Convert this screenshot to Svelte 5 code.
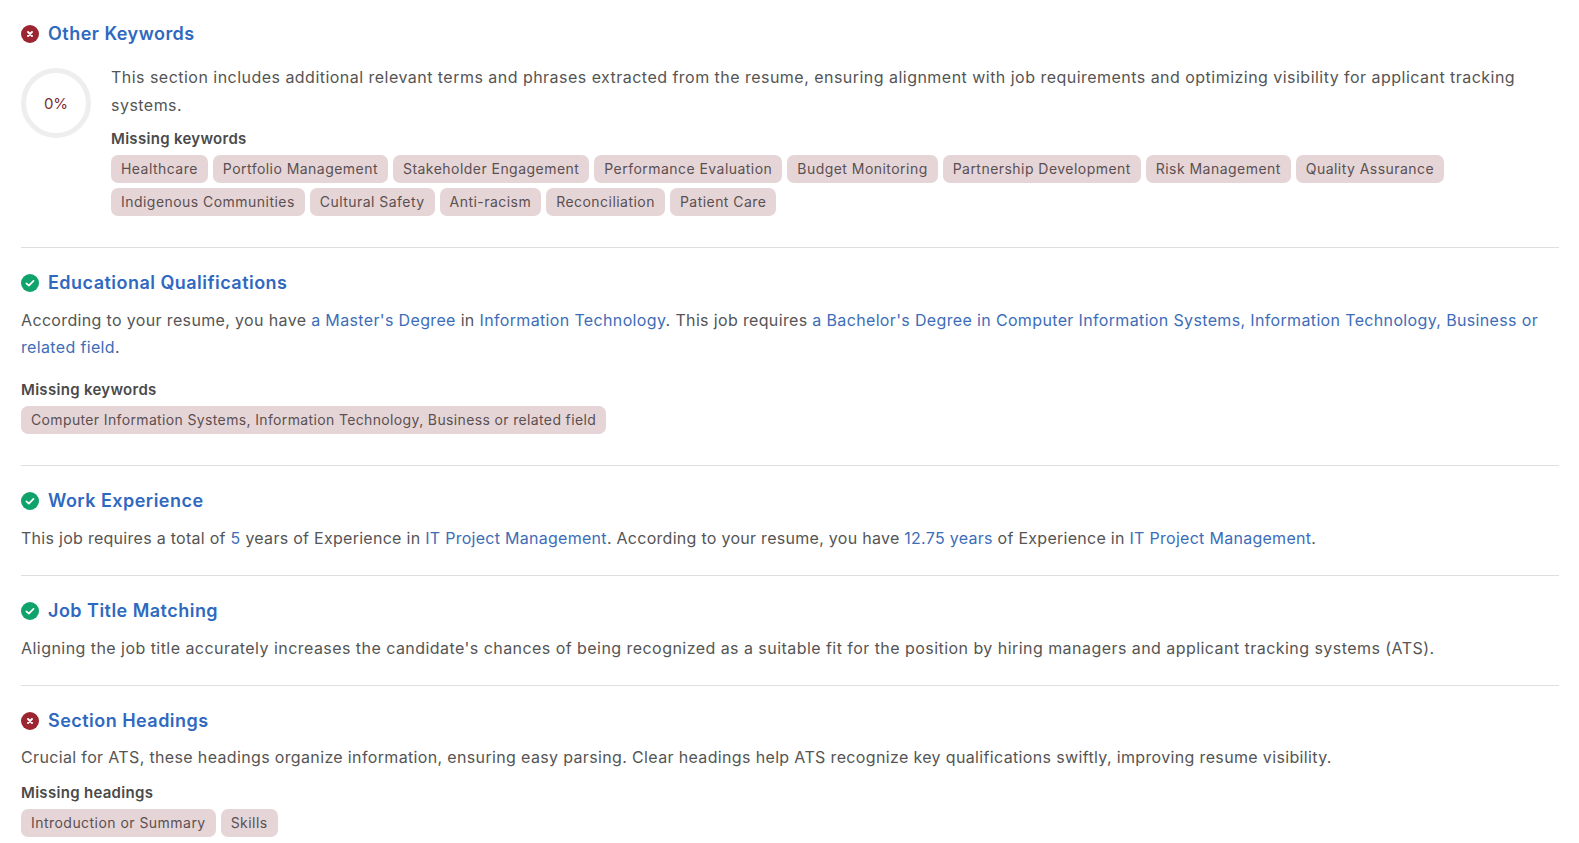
<script>
const first = ["Healthcare","Portfolio Management","Stakeholder Engagement","Performance Evaluation","Budget Monitoring","Partnership Development","Risk Management","Quality Assurance","Indigenous Communities","Cultural Safety","Anti-racism","Reconciliation","Patient Care"]
</script>

{#snippet status(ok)}
	<svg class="status" viewBox="0 0 18 18" width="18" height="18">
		<circle cx="9" cy="9" r="9" fill={ok ? "#0fa36b" : "#9b2530"} />
		{#if ok}
			<path d="M5.4 9.3l2.5 2.4 4.6-4.9" fill="none" stroke="#fff" stroke-width="1.7" stroke-linecap="round" stroke-linejoin="round" />
		{:else}
			<path d="M7 7l4 4M11 7l-4 4" fill="none" stroke="#fff" stroke-width="1.9" stroke-linecap="round" />
		{/if}
	</svg>
{/snippet}

<div class="page">
	<section class="first">
		<h2>{@render status(false)}Other Keywords</h2>
		<div class="score-row">
			<div class="ring">0%</div>
			<div class="score-body">
				<p class="intro">This section includes additional relevant terms and phrases extracted from the resume, ensuring alignment with job requirements and optimizing visibility for applicant tracking systems.</p>
				<h3>Missing keywords</h3>
				<div class="tags">
					{#each first as t}<span class="tag">{t}</span>{/each}
				</div>
			</div>
		</div>
	</section>

	<section class="edu">
		<h2>{@render status(true)}Educational Qualifications</h2>
		<p>According to your resume, you have <b>a Master's Degree</b> in <b>Information Technology</b>. This job requires <b>a Bachelor's Degree in Computer Information Systems, Information Technology, Business or related field</b>.</p>
		<h3>Missing keywords</h3>
		<div class="tags">
			<span class="tag">Computer Information Systems, Information Technology, Business or related field</span>
		</div>
	</section>

	<section class="work">
		<h2>{@render status(true)}Work Experience</h2>
		<p>This job requires a total of <b>5</b> years of Experience in <b>IT Project Management</b>. According to your resume, you have <b>12.75 years</b> of Experience in <b>IT Project Management</b>.</p>
	</section>

	<section>
		<h2>{@render status(true)}Job Title Matching</h2>
		<p>Aligning the job title accurately increases the candidate's chances of being recognized as a suitable fit for the position by hiring managers and applicant tracking systems (ATS).</p>
	</section>

	<section class="last">
		<h2>{@render status(false)}Section Headings</h2>
		<p>Crucial for ATS, these headings organize information, ensuring easy parsing. Clear headings help ATS recognize key qualifications swiftly, improving resume visibility.</p>
		<h3>Missing headings</h3>
		<div class="tags">
			<span class="tag">Introduction or Summary</span>
			<span class="tag">Skills</span>
		</div>
	</section>
</div>

<style>
	:global(body) {
		background: #fff;
	}

	.page {
		padding: 0 20px 0 21px;
		height: 843px;
		overflow: hidden;
		box-sizing: border-box;
		font-family: Inter, "Liberation Sans", sans-serif;
		color: #555;
	}

	section {
		border-bottom: 1px solid #dfdfdf;
		padding: 23px 0;
	}

	section.first {
		padding: 22px 0 31px;
	}

	section.edu {
		padding-bottom: 31px;
	}

	section.last {
		border-bottom: 0;
	}

	h2 {
		display: flex;
		align-items: center;
		gap: 9px;
		margin: 0 0 12px;
		font-size: 18px;
		line-height: 24px;
		font-weight: 600;
		letter-spacing: 0.47px;
		color: #2f69bf;
	}

	.last h2 {
		margin-bottom: 11px;
	}

	.status {
		flex: none;
	}

	p {
		margin: 0;
		font-size: 16px;
		line-height: 27px;
		letter-spacing: 0.45px;
	}

	.edu p, .last p {
		letter-spacing: 0.35px;
	}

	.work p {
		letter-spacing: 0.28px;
	}

	.intro {
		line-height: 28px;
		letter-spacing: 0.47px;
	}

	b {
		font-weight: 400;
		color: #3d6db8;
	}

	h3 {
		margin: 11px 0 5px;
		font-size: 15px;
		line-height: 22px;
		font-weight: 600;
		letter-spacing: 0.3px;
		color: #4a4a4a;
	}

	.score-body h3 {
		margin-top: 9px;
	}

	.edu h3 {
		margin-top: 18px;
	}

	.score-row {
		display: flex;
		gap: 20px;
		margin-top: 22px;
	}

	.ring {
		flex: none;
		width: 70px;
		height: 70px;
		box-sizing: border-box;
		border: 5px solid #eeeeee;
		border-radius: 50%;
		display: flex;
		align-items: center;
		justify-content: center;
		font-size: 15px;
		color: #7b2c33;
	}

	.score-body {
		flex: 1;
		margin-top: -5px;
	}

	.tags {
		display: flex;
		flex-wrap: wrap;
		gap: 5px;
	}

	.tag {
		background: #e6d5d7;
		border-radius: 7px;
		padding: 0 10px;
		font-size: 14px;
		line-height: 28px;
		letter-spacing: 0.46px;
		color: #5a5052;
	}

	.edu .tag {
		letter-spacing: 0.36px;
	}
</style>
